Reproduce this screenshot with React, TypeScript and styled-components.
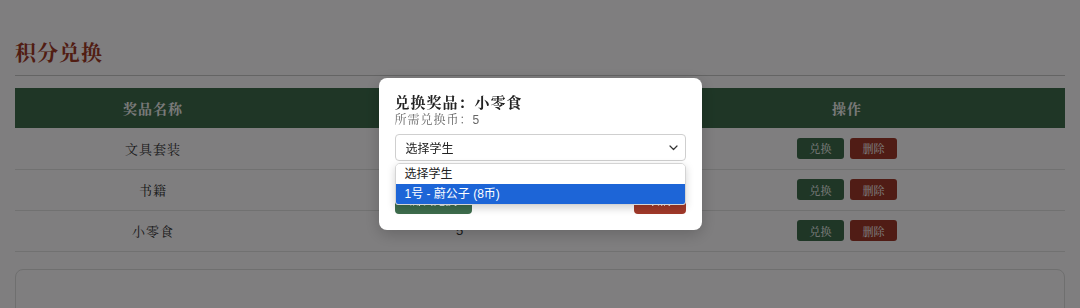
import styled, { createGlobalStyle } from 'styled-components'

const GlobalStyle = createGlobalStyle`
  html, body {
    margin: 0;
    padding: 0;
    background: #fefcff;
    font-family: 'Liberation Serif', 'Noto Serif CJK SC', 'Noto Sans CJK SC', serif;
    color: #333;
  }
  * { box-sizing: border-box; }
`

const SERIF = `'Liberation Serif', 'Noto Serif CJK SC', 'Noto Sans CJK SC', serif`
const SANS = `'Liberation Sans', 'Noto Sans CJK SC', sans-serif`

const GREEN = '#3e6d4d'
const RED = '#a1392a'

type Prize = {
  name: string
  cost: number
}

const prizes: Prize[] = [
  { name: '文具套装', cost: 10 },
  { name: '书籍', cost: 20 },
  { name: '小零食', cost: 5 },
]

const Page = styled.div`
  padding: 0 15px;
  height: 308px;
  overflow: hidden;
`

const Title = styled.h2`
  margin: 38px 0 0;
  padding-bottom: 7px;
  font-size: 21px;
  line-height: 30px;
  font-weight: 700;
  color: #a33a26;
  letter-spacing: 1px;
  border-bottom: 1px solid #c8c8c8;
`

const Table = styled.table`
  width: 100%;
  margin-top: 12px;
  border-collapse: collapse;
  font-size: 13px;
`

const HeadCell = styled.th<{ $w: number }>`
  width: ${(p) => p.$w}px;
  height: 40px;
  background: ${GREEN};
  color: #f4f4f4;
  font-size: 14px;
  font-weight: 700;
  text-align: center;
  letter-spacing: 1px;
`

const Cell = styled.td<{ $sans?: boolean }>`
  height: 41px;
  text-align: center;
  border-bottom: 1px solid #e2e2e2;
  color: #333;
  letter-spacing: 1px;
  font-family: ${(p) => (p.$sans ? SANS : SERIF)};
`

const Actions = styled.div`
  display: flex;
  justify-content: center;
  gap: 6px;
`

const SmallButton = styled.button<{ $red?: boolean }>`
  width: 47px;
  height: 21px;
  border: none;
  border-radius: 3px;
  background: ${(p) => (p.$red ? RED : GREEN)};
  color: #fff;
  font-family: ${SERIF};
  font-size: 11px;
  padding: 0;
`

const Card = styled.div`
  margin-top: 17px;
  height: 80px;
  border: 1px solid #dedede;
  border-radius: 8px;
`

const Overlay = styled.div`
  position: fixed;
  inset: 0;
  background: rgba(0, 0, 0, 0.5);
  display: flex;
  align-items: center;
  justify-content: center;
`

const Modal = styled.div`
  width: 323px;
  padding: 15px 16px 16px;
  background: #fff;
  border-radius: 8px;
  box-shadow: 0 4px 16px rgba(0, 0, 0, 0.2);
`

const ModalTitle = styled.h3`
  margin: 0;
  font-size: 15px;
  line-height: 20px;
  font-weight: 700;
  color: #222;
  letter-spacing: 1px;
`

const ModalSub = styled.p`
  margin: 0;
  font-size: 12px;
  line-height: 15px;
  color: #666;
  letter-spacing: 1px;

  b {
    font-family: ${SANS};
    font-weight: 400;
  }
`

const SelectWrap = styled.div`
  position: relative;
  margin-top: 6px;
`

const SelectBox = styled.div`
  height: 27px;
  border: 1px solid #cfcfcf;
  border-radius: 4px;
  display: flex;
  align-items: center;
  justify-content: space-between;
  padding: 0 7px 0 10px;
  font-family: ${SANS};
  font-size: 12px;
  color: #222;
`

const OptionList = styled.ul`
  position: absolute;
  top: calc(100% + 2px);
  left: 0;
  right: 0;
  margin: 0;
  padding: 0;
  list-style: none;
  background: #fff;
  border: 1px solid #d4d4d4;
  border-radius: 5px 5px 3px 3px;
  box-shadow: 0 3px 8px rgba(0, 0, 0, 0.18);
  overflow: hidden;
  z-index: 2;
`

const OptionItem = styled.li<{ $active?: boolean }>`
  height: 20px;
  line-height: 20px;
  padding-left: 9px;
  font-family: ${SANS};
  font-size: 12px;
  color: ${(p) => (p.$active ? '#fff' : '#222')};
  background: ${(p) => (p.$active ? '#1d65d7' : '#fff')};
`

const ButtonRow = styled.div`
  display: flex;
  justify-content: space-between;
  margin-top: 25px;
`

const ModalButton = styled.button<{ $red?: boolean; $w: number }>`
  width: ${(p) => p.$w}px;
  height: 28px;
  border: none;
  border-radius: 4px;
  background: ${(p) => (p.$red ? RED : GREEN)};
  color: #fff;
  font-family: ${SERIF};
  font-size: 12px;
`

const Chevron = () => (
  <svg width="9" height="6" viewBox="0 0 9 6" fill="none">
    <path d="M1 1l3.5 3.5L8 1" stroke="#333" strokeWidth="1.2" strokeLinecap="round" strokeLinejoin="round" />
  </svg>
)

const App = () => {
  return (
    <>
      <GlobalStyle />
      <Page>
        <Title>积分兑换</Title>
        <Table>
          <thead>
            <tr>
              <HeadCell $w={276}>奖品名称</HeadCell>
              <HeadCell $w={338}>所需兑换币</HeadCell>
              <HeadCell $w={436}>操作</HeadCell>
            </tr>
          </thead>
          <tbody>
            {prizes.map((prize) => (
              <tr key={prize.name}>
                <Cell>{prize.name}</Cell>
                <Cell $sans>{prize.cost}</Cell>
                <Cell>
                  <Actions>
                    <SmallButton>兑换</SmallButton>
                    <SmallButton $red>删除</SmallButton>
                  </Actions>
                </Cell>
              </tr>
            ))}
          </tbody>
        </Table>
        <Card />
      </Page>
      <Overlay>
        <Modal>
          <ModalTitle>兑换奖品：小零食</ModalTitle>
          <ModalSub>
            所需兑换币：<b>5</b>
          </ModalSub>
          <SelectWrap>
            <SelectBox>
              <span>选择学生</span>
              <Chevron />
            </SelectBox>
            <OptionList>
              <OptionItem>选择学生</OptionItem>
              <OptionItem $active>1号 - 蔚公子 (8币)</OptionItem>
            </OptionList>
          </SelectWrap>
          <ButtonRow>
            <ModalButton $w={77}>确认兑换</ModalButton>
            <ModalButton $w={52} $red>
              取消
            </ModalButton>
          </ButtonRow>
        </Modal>
      </Overlay>
    </>
  )
}

export default App
